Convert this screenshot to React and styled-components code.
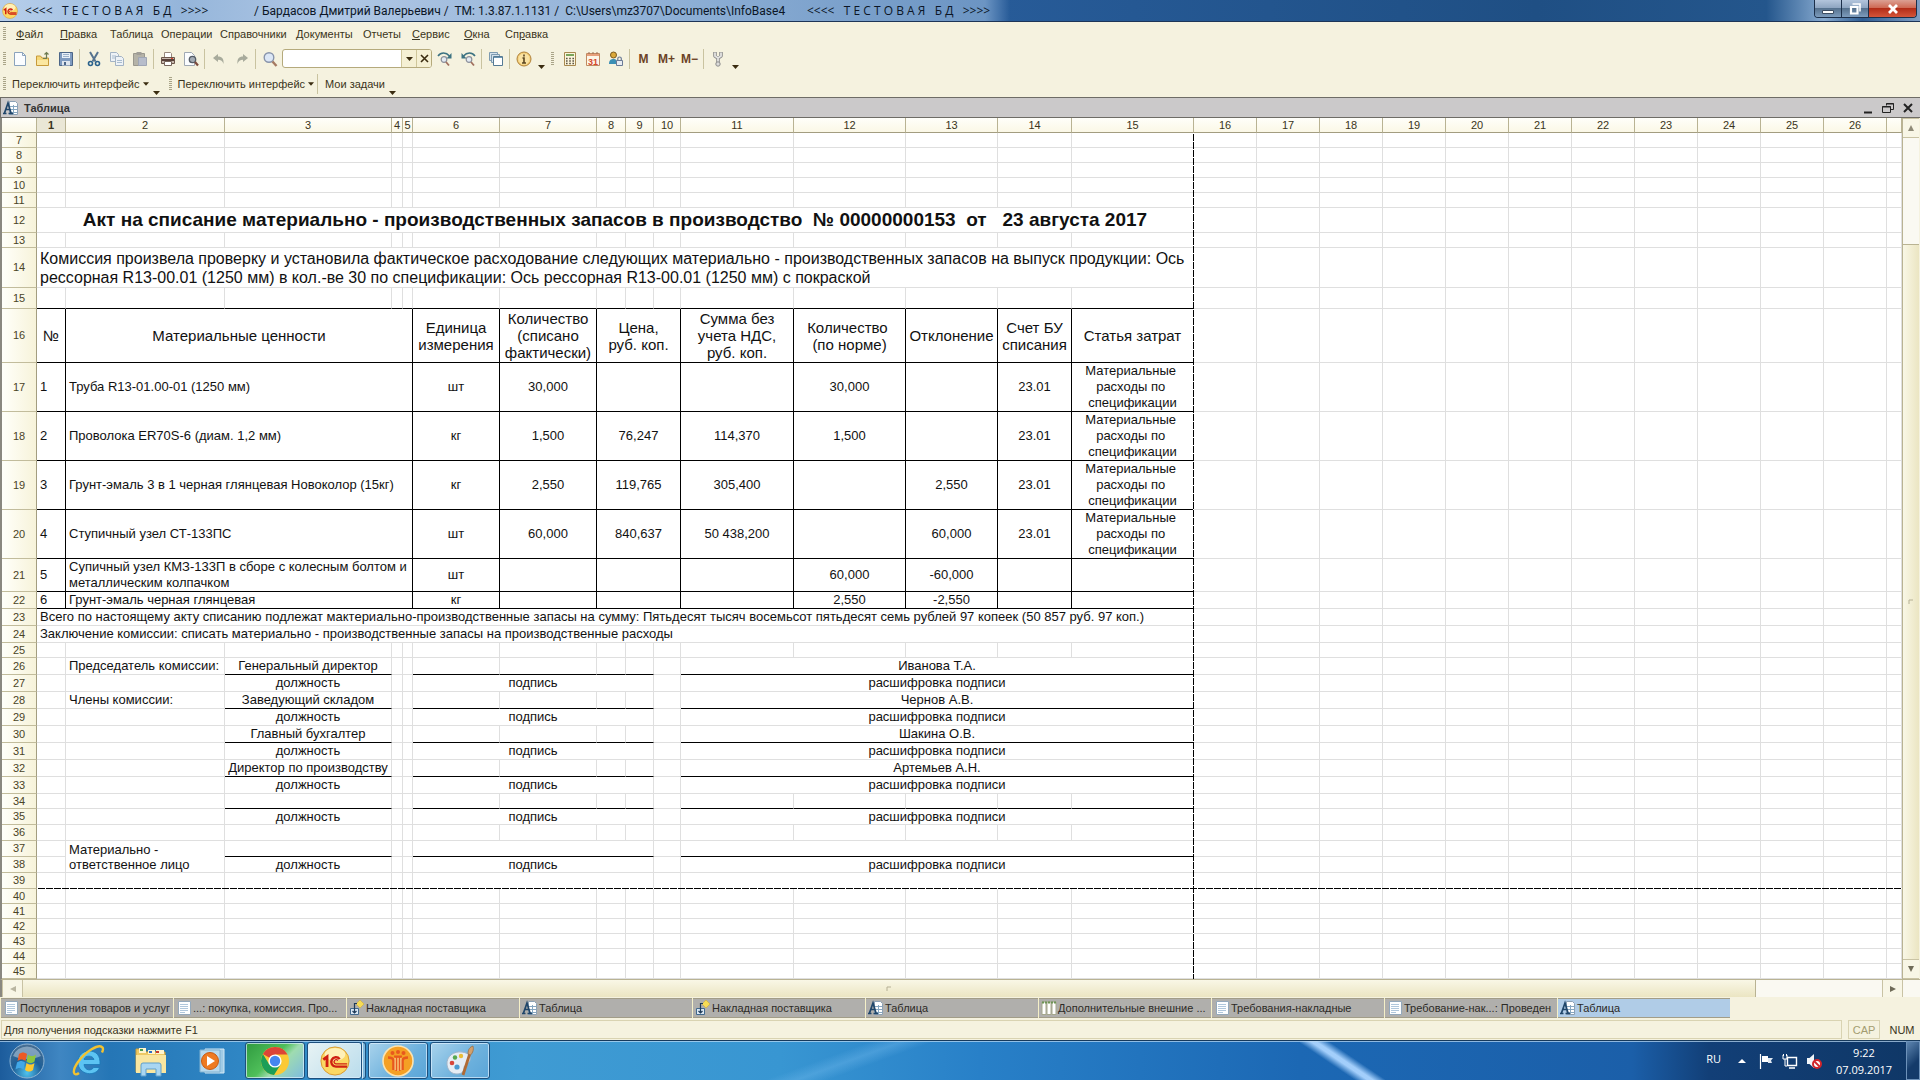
import React from 'react';
import styled, { createGlobalStyle, css } from 'styled-components';

const GlobalStyle = createGlobalStyle`
  * {
    box-sizing: border-box;
  }

  body {
    margin: 0;
    font-family: 'Liberation Sans', Arial, sans-serif;
    font-size: 11px;
    color: #3a3420;
    background: #f5f2df;
  }

  button,
  input {
    margin: 0;
    padding: 0;
    border: 0;
    background: none;
    font: inherit;
    color: inherit;
  }
`;

const Window = styled.div`
  display: flex;
  flex-direction: column;
  height: 100vh;
  overflow: hidden;
`;

/* Title bar */

const TitleBar = styled.header`
  display: flex;
  justify-content: space-between;
  height: 22px;
  border-bottom: 1px solid #1d3557;
  background:
    linear-gradient(90deg, rgba(190, 212, 238, 0.95) 0, rgba(160, 190, 224, 0.9) 180px, rgba(190, 210, 236, 0.9) 330px, rgba(150, 182, 218, 0.9) 700px, rgba(125, 163, 206, 0.8) 985px, rgba(125, 163, 206, 0) 1010px),
    linear-gradient(90deg, #2f68a8 0, #275b98 1000px, #1f4f84 80%, #24568c 92%, #86a9cf 95%, #2e5d93 97%, #7f9fc4 100%);
`;

const TitleText = styled.div`
  display: flex;
  align-items: center;
  gap: 4px;
  padding-left: 2px;
  font-family: Roboto, 'Noto Sans', sans-serif;
  font-size: 12px;
  line-height: 20px;
  color: #0c1626;
  white-space: pre;
`;

const TitlePart = styled.span`
  min-width: ${props => props.$width}px;
`;

const Banner = styled(TitlePart)`
  font-family: 'Open Sans', 'Noto Sans', sans-serif;
`;

const WindowButtons = styled.div`
  display: flex;
  height: 18px;
  margin-right: 3px;
  border: 1px solid #1c2f4a;
  border-top: 0;
  border-radius: 0 0 4px 4px;
  overflow: hidden;
`;

const WindowButton = styled.button`
  display: flex;
  align-items: center;
  justify-content: center;
  width: ${props => (props.$close ? 47 : 27)}px;
  border-right: 1px solid #1c2f4a;
  background: ${props => (props.$close
    ? 'linear-gradient(#dba093, #cf6a55 45%, #b32d18 50%, #d4553a)'
    : 'linear-gradient(#b3c5dc, #8fa6c2 45%, #56728f 50%, #7d9cbd)')};

  &:last-child {
    border-right: 0;
  }
`;

/* Menu and toolbars */

const MenuBar = styled.nav`
  display: grid;
  grid-template-columns: 13px 44px 50px 51px 59px 76px 67px 49px 52px 41px 50px;
  align-items: center;
  height: 24px;
  padding-left: 3px;
`;

const MenuItem = styled.button`
  text-align: left;
  line-height: 14px;
`;

const Toolbar = styled.div`
  display: flex;
  align-items: center;
  height: ${props => props.$height}px;
  padding-left: 3px;
`;

const Grip = styled.span`
  width: 3px;
  height: 14px;
  margin-right: ${props => props.$gap || 2}px;
  background: repeating-linear-gradient(#a9a488 0, #a9a488 1px, transparent 1px, transparent 2px);
`;

const ToolButton = styled.button`
  display: flex;
  align-items: center;
  justify-content: center;
  width: 23px;
  height: 22px;
  font-size: 12px;
  font-weight: bold;
  color: #6b4226;
`;

const Separator = styled.span`
  width: 1px;
  height: 20px;
  margin: 0 2px;
  background: #c9c3a0;
`;

const Overflow = styled.button`
  align-self: flex-end;
  width: 13px;
  height: 12px;
  margin-right: ${props => props.$gap || 0}px;
`;

const SearchBox = styled.div`
  display: flex;
  width: 150px;
  height: 19px;
  margin: 0 1px;
  border: 1px solid #b5aa7c;
  border-radius: 3px;
  background: #fff;
  overflow: hidden;

  input {
    flex: 1;
    min-width: 0;
    padding: 0 3px;
    outline: 0;
  }

  button {
    display: flex;
    align-items: center;
    justify-content: center;
    width: 15px;
    border-left: 1px solid #cfc69a;
    background: #f5f0d4;
  }
`;

const TextButton = styled.button`
  display: flex;
  align-items: center;
  gap: 3px;
  padding: 0 1px 0 5px;
  line-height: 14px;
`;

/* Document window */

const DocTitle = styled.div`
  display: flex;
  align-items: center;
  justify-content: space-between;
  height: 21px;
  padding: 0 6px 0 2px;
  border-top: 1px solid #6e6c66;
  border-bottom: 1px solid #6e6c66;
  border-left: 1px solid #6e6c66;
  background: #cbc9ca;
  font-weight: bold;
  color: #333;
`;

const DocName = styled.div`
  display: flex;
  align-items: center;
  gap: 5px;
`;

const DocButtons = styled.div`
  display: flex;
  gap: 8px;

  button {
    display: flex;
    width: 12px;
    height: 12px;
  }
`;

const SheetArea = styled.div`
  display: flex;
  flex: 1;
  min-height: 0;
  padding-right: 1px;
  border-left: 2px solid #8a8880;
`;

const SheetView = styled.main`
  position: relative;
  flex: 1;
  min-width: 0;
  overflow: hidden;
  background: #fff;
`;

const Sheet = styled.table`
  width: 100%;
  table-layout: fixed;
  border-collapse: separate;
  border-spacing: 0;
  color: #111;
`;

const ColHead = styled.th`
  height: 15px;
  padding: 0;
  border-right: 1px solid #b9b393;
  border-bottom: 1px solid #a39d80;
  background: ${props => (props.$active ? '#eae7d6' : 'linear-gradient(#fffffa, #fbf8e6)')};
  font-size: 11px;
  font-weight: ${props => (props.$active ? 'bold' : 'normal')};
  line-height: 13px;
  color: #3a3420;
`;

const RowHead = styled.th`
  padding: 0;
  border-right: 1px solid #a39d80;
  border-bottom: 1px solid #c2bc9c;
  background: linear-gradient(90deg, #fffffa, #f7f3da);
  font-size: 11px;
  font-weight: normal;
  line-height: 13px;
  color: #4a4426;
`;

const lineColors = { grid: '#dfdfdf', black: '#000' };

const textStyles = {
  body: css`font-size: 13px; line-height: 16px;`,
  tight: css`font-size: 13px; line-height: 15px;`,
  head: css`font-size: 15px; line-height: 17px;`,
  lead: css`font-size: 16px; line-height: 19px;`,
  title: css`font-size: 19px; line-height: 22px; font-weight: bold;`,
};

const Cell = styled.td`
  padding: 0 0 0 ${props => (props.$align === 'left' ? 3 : 0)}px;
  border-right: 1px solid ${props => lineColors[props.$right || 'grid']};
  border-bottom: 1px solid ${props => lineColors[props.$bottom || 'grid']};
  text-align: ${props => props.$align || 'center'};
  white-space: pre;
  ${props => textStyles[props.$kind || 'body']}
`;

const Row = styled.tr`
  height: ${props => props.$height}px;
`;

const dashes = 'transparent 0, transparent 1px, #000 1px, #000 8px';

const BreakRight = styled.div`
  position: absolute;
  top: 15px;
  bottom: 0;
  left: 1191px;
  width: 1px;
  background: repeating-linear-gradient(${dashes}), #fff;
`;

const BreakBottom = styled.div`
  position: absolute;
  top: 770px;
  left: 35px;
  right: 0;
  height: 1px;
  background: repeating-linear-gradient(90deg, ${dashes}), #fff;
`;

const ScrollColumn = styled.div`
  display: flex;
  flex-direction: column;
  width: 17px;
  border-left: 1px solid #b9b393;
  background: #faf9f2;
`;

const ScrollRow = styled.div`
  display: flex;
  height: 18px;
  padding-right: 17px;
  border-top: 1px solid #b9b393;
  border-left: 2px solid #8a8880;
  background: #faf9f2;
`;

const ScrollButton = styled.button`
  display: flex;
  align-items: center;
  justify-content: center;
  width: ${props => (props.$wide ? 21 : 16)}px;
  height: ${props => (props.$wide ? 17 : 20)}px;
  border: 0 solid #c9c3a4;
  border-width: ${props => (props.$wide ? '0 1px' : '1px 0')};
  background: #f8f6e6;
`;

const ScrollTrack = styled.div`
  display: flex;
  flex-direction: ${props => (props.$vertical ? 'column' : 'row')};
  flex: 1;
`;

const ScrollGap = styled.div`
  flex: ${props => props.$size};
`;

const Thumb = styled.div`
  display: flex;
  align-items: center;
  justify-content: center;
  flex: ${props => props.$size};
  border: 0 solid #b9b393;
  border-width: ${props => (props.$vertical ? '1px 0 0' : '0 1px 0 0')};
  background: linear-gradient(${props => (props.$vertical ? '90deg' : '180deg')}, #f9f7e6, #ebe5c2);
`;

/* Window tabs and status bar */

const TabBar = styled.div`
  display: flex;
  height: 23px;
  padding: 1px 0 2px;
`;

const Tab = styled.button`
  display: flex;
  align-items: center;
  gap: 1px;
  flex: 0 1 173px;
  min-width: 0;
  padding-left: 2px;
  border-left: 1px solid #f5f0c8;
  background: ${props => (props.$active ? '#b0cce7' : '#b0afac')};
  box-shadow: inset 0 1px #a29d88, inset 0 -1px #a29d88;
  color: #2c2a26;
  white-space: nowrap;
`;

const StatusBar = styled.footer`
  display: flex;
  gap: 6px;
  height: 20px;
  padding: 0 2px 1px 1px;
`;

const StatusBox = styled.div`
  flex: ${props => (props.$grow ? 1 : 'none')};
  width: ${props => (props.$grow ? 'auto' : '32px')};
  padding: 0 2px;
  border: 1px solid ${props => (props.$bare ? 'transparent' : '#d9d3b2')};
  line-height: 18px;
  text-align: ${props => (props.$grow ? 'left' : 'center')};
  color: ${props => (props.$muted ? '#a39c70' : '#3a3420')};
`;

/* Taskbar */

const Taskbar = styled.div`
  display: flex;
  align-items: stretch;
  height: 40px;
  border-top: 1px solid #173a5c;
  box-shadow: inset 0 1px rgba(190, 220, 245, 0.7);
  background:
    linear-gradient(34deg, transparent 38%, rgba(170, 212, 255, 0.95) 47%, rgba(170, 212, 255, 0.95) 51%, transparent 60%) 1300px 0 / 86px 100% no-repeat,
    linear-gradient(160deg, transparent 44%, rgba(120, 190, 240, 0.35) 50%, transparent 56%) 640px 0 / 420px 100% no-repeat,
    linear-gradient(90deg, #1c5c9c 0, #3f86c2 60px, #2576b6 110px, #2f86c4 240px, #3f9bd3 520px, #3896d2 780px, #2880c8 980px, #1c68b4 1300px, #1b5fa9 85%, #123f77 89%, #0f3766 100%);
`;

const Launch = styled.button`
  display: flex;
  align-items: center;
  justify-content: center;
  width: ${props => props.$width}px;
`;

const TaskButton = styled.button`
  display: flex;
  align-items: center;
  justify-content: center;
  width: ${props => props.$width || 60}px;
  margin: 1px 2px 1px 0;
  border: 1px solid #1d4f7c;
  border-radius: 3px;
  box-shadow: inset 0 0 0 1px rgba(220, 240, 255, 0.7);
  background: ${props => props.$tint || 'linear-gradient(135deg, #a9d3ec, #6db1dd 60%, #5aa5d8)'};
`;

const Stack = styled.span`
  width: 4px;
  margin: 1px 2px 1px -2px;
  border: 1px solid #1d4f7c;
  border-left-color: #d5ebf8;
  border-radius: 0 3px 3px 0;
  background: #7fb9de;
`;

const Tray = styled.div`
  display: flex;
  align-items: center;
  gap: 8px;
  margin-left: auto;
  font-family: 'Open Sans', 'Noto Sans', sans-serif;
  font-size: 11px;
  color: #fff;
`;

const Language = styled.span`
  margin-right: 5px;
  padding-bottom: 5px;
`;

const Clock = styled.time`
  width: 68px;
  line-height: 17px;
  text-align: center;
`;

const ShowDesktop = styled.button`
  align-self: stretch;
  width: 14px;
  border: 1px solid #6d92ba;
  background: linear-gradient(135deg, #5e86b0, #143b6a 60%);
`;

/* Icons */

const Icon = ({ size = 16, box = 16, children }) => (
  <svg width={size} height={size} viewBox={`0 0 ${box} ${box}`} fill="none" aria-hidden="true">
    {children}
  </svg>
);

const Down = ({ size = 7 }) => (
  <svg width={size} height="4" viewBox="0 0 7 4" aria-hidden="true">
    <path d="M0 0h7L3.500 4z" fill="#3a2c10" />
  </svg>
);

const icons = {
  file: (
    <Icon><path d="M2.500 1.500h8l3 3v10h-11z" fill="#fbfdff" stroke="#8ba3bd" /><path d="M10.500 1.500v3h3" stroke="#8ba3bd" /></Icon>
  ),
  open: (
    <Icon>
      <path d="M1.500 5h4l1.500 2h6.500v7.500h-12z" fill="#f6d878" stroke="#c79a3a" />
      <path d="M2 9h11v5H2z" fill="#fbe7a0" />
      <path d="M8 7.500h3.500v-6M9.500 3.500l2-2 2 2" stroke="#6f7c52" strokeWidth="1.200" />
    </Icon>
  ),
  save: (
    <Icon>
      <path d="M1.500 1.500h13v13h-13z" fill="#7f9bc0" stroke="#4c6688" />
      <path d="M4 2h8v5H4z" fill="#e8f0f8" /><path d="M5 3.500h6M5 5.500h6" stroke="#9cb1ca" />
      <path d="M4 10h8v4.500H4z" fill="#dfe6ee" /><path d="M6 11h2v3H6z" fill="#4c6688" />
    </Icon>
  ),
  cut: (
    <Icon>
      <path d="M4 1l5.500 9.500M12 1L6.500 10.500" stroke="#56738f" strokeWidth="2" />
      <circle cx="4.500" cy="12.500" r="2" stroke="#2a628c" strokeWidth="1.600" />
      <circle cx="11.500" cy="12.500" r="2" stroke="#2a628c" strokeWidth="1.600" />
    </Icon>
  ),
  copy: (
    <Icon>
      <path d="M1.500 1.500h6l2 2v7h-8z" fill="#eef2f6" stroke="#a3b3c4" /><path d="M3 5h4M3 7h4" stroke="#a9bccf" />
      <path d="M6.500 5.500h6l2 2v7h-8z" fill="#eef2f6" stroke="#a3b3c4" /><path d="M8 9.500h5M8 11.500h5" stroke="#a9bccf" />
    </Icon>
  ),
  paste: (
    <Icon>
      <path d="M1.500 2.500h11v12h-11z" fill="#b5b3a8" stroke="#9a988e" /><path d="M4.500 1h5v3h-5z" fill="#a09e98" />
      <path d="M6.500 6.500h8v8h-8z" fill="#b7bdcb" stroke="#9fa6b5" />
    </Icon>
  ),
  print: (
    <Icon>
      <path d="M4.500 1.500h6l1 1v5h-7z" fill="#fff" stroke="#98887c" />
      <path d="M1.500 6.500h13v6h-13z" fill="#c8b9ae" stroke="#6c564a" />
      <path d="M2 9h12" stroke="#574038" strokeWidth="2" /><path d="M4.500 10.500h7v4h-7z" fill="#fff" stroke="#77665c" />
      <path d="M11 7.500h2" stroke="#d8452e" />
    </Icon>
  ),
  preview: (
    <Icon>
      <path d="M1.500 1.500h7l3 3v10h-10z" fill="#fbfdff" stroke="#a0a9b3" />
      <circle cx="9.500" cy="8.500" r="3.200" fill="#a3abb4" stroke="#545c66" strokeWidth="1.300" />
      <path d="M12 11l3 3.500" stroke="#7d4b3d" strokeWidth="2.200" />
    </Icon>
  ),
  undo: (
    <Icon><path d="M2 7l5-4v2.500c4 0 6 2 5.500 7.500C11.500 10 10 8.800 7 8.800V11z" fill="#a8ab9c" /></Icon>
  ),
  redo: (
    <Icon><path d="M14 7L9 3v2.500c-4 0-6 2-5.500 7.500C4.500 10 6 8.800 9 8.800V11z" fill="#a8ab9c" /></Icon>
  ),
  search: (
    <Icon>
      <circle cx="7" cy="6.500" r="4.800" fill="#dce7f6" stroke="#8894ab" strokeWidth="1.400" />
      <path d="M10.500 10.500l4 4.500" stroke="#a57a62" strokeWidth="2.400" />
    </Icon>
  ),
  findNext: (
    <Icon>
      <path d="M1 5c3-4 8-4 11.500 0" stroke="#3c7282" strokeWidth="1.600" /><path d="M14.500 2v5.500H9.500z" fill="#3c7282" />
      <circle cx="7" cy="8.500" r="2.800" fill="#e3ebf3" stroke="#8b8f9a" strokeWidth="1.200" />
      <path d="M9 11l3 3.500" stroke="#a1705e" strokeWidth="1.800" />
    </Icon>
  ),
  findPrev: (
    <Icon>
      <path d="M15 5c-3-4-8-4-11.500 0" stroke="#3c7282" strokeWidth="1.600" /><path d="M1.500 2v5.500h5z" fill="#3c7282" />
      <circle cx="9" cy="8.500" r="2.800" fill="#e3ebf3" stroke="#8b8f9a" strokeWidth="1.200" />
      <path d="M11 11l3 3.500" stroke="#a1705e" strokeWidth="1.800" />
    </Icon>
  ),
  windows: (
    <Icon>
      <path d="M1.500 1.500h8v8h-8z" fill="#d5e2ec" stroke="#7d9ab0" /><path d="M3.500 3.500h8v8h-8z" fill="#d5e2ec" stroke="#7d9ab0" />
      <path d="M5.500 5.500h9v9h-9z" fill="#fff" stroke="#557a94" /><path d="M6 6.500h8" stroke="#6c95b2" />
    </Icon>
  ),
  info: (
    <Icon>
      <circle cx="8" cy="8" r="7" fill="#f3cf78" stroke="#b0813a" /><circle cx="8" cy="8" r="5.500" fill="#f9e2a4" />
      <path d="M8 3.500v2M6.500 7H8v5M6 12h4" stroke="#5a4520" strokeWidth="1.600" />
    </Icon>
  ),
  calc: (
    <Icon>
      <path d="M2.500 1.500h11v13h-11z" fill="#fbf5dc" stroke="#a8894f" /><path d="M4 3h8v2H4z" fill="#7aa55a" />
      <path d="M4 7.500h8M4 10h8M4 12.500h8" stroke="#5c5340" strokeWidth="1.400" strokeDasharray="1.600 1.600" />
    </Icon>
  ),
  calendar: (
    <Icon>
      <path d="M1.500 2.500h13v12h-13z" fill="#fdf6e8" stroke="#c08a62" /><path d="M2 3h12v2H2z" fill="#e7a07c" />
      <path d="M4 1v2M8 1v2M12 1v2" stroke="#a06c50" />
      <text x="8" y="13.500" textAnchor="middle" fontSize="9" fill="#d4492c">31</text>
    </Icon>
  ),
  userLock: (
    <Icon>
      <circle cx="5.500" cy="4" r="3" fill="#dba93a" stroke="#7a5a20" /><path d="M1 13c0-4 2-5 4.500-5S9 9 9 13z" fill="#3b8fb5" />
      <path d="M8.500 9.500h6v5h-6z" fill="#e8ecf2" stroke="#6a7a96" /><path d="M9.800 9V7.500c0-2 3.500-2 3.500 0V9" stroke="#6a7a96" strokeWidth="1.200" />
    </Icon>
  ),
  wrench: (
    <Icon>
      <path d="M5 1v4L8 7l3-2V1M8 6v7" stroke="#8c8c8c" strokeWidth="3.600" strokeLinejoin="round" />
      <path d="M5 1.500V5L8 7l3-2V1.500M8 6v7" stroke="#e4e4e2" strokeWidth="1.800" strokeLinejoin="round" />
      <circle cx="8" cy="13" r="2.200" fill="#dcdcda" stroke="#8c8c8c" />
    </Icon>
  ),
  table: (
    <Icon>
      <path d="M6.500 1.500h6l2 2v11h-8z" fill="#fff" stroke="#8ca1b5" />
      <path d="M7 6.500h7M7 9.500h7M7 12.500h7M10.500 5v9" stroke="#86a6c0" />
      <path d="M0 13.500h3.500M5.500 13.500H10M1.500 13L5 3l3 10M3 9.500h4" stroke="#20466a" strokeWidth="1.700" />
    </Icon>
  ),
  page: (
    <Icon>
      <path d="M2.500 1.500h12v13h-12z" fill="#fdfeff" stroke="#93a8bb" />
      <path d="M4 4.500h8M4 6.500h8M4 8.500h8M4 10.500h8M4 12.500h5" stroke="#b0c7dc" />
    </Icon>
  ),
  invoice: (
    <Icon>
      <path d="M11 0l4 4-4 4-4-4z" fill="#f6db55" stroke="#cfa93a" strokeWidth="0.600" />
      <path d="M1.500 8.500h8v6h-8z" fill="#dbe8f4" stroke="#41698e" />
      <path d="M5.500 13V3.500H8M3.500 11l2 2 2-2" stroke="#1e3a58" strokeWidth="1.200" />
    </Icon>
  ),
  columns: (
    <Icon>
      <path d="M1 2h4v12.500H1zM6 2h4v12.500H6zM11 2h4v12.500h-4z" fill="#fff" stroke="#a5a78c" />
      <path d="M1 2.500h14" stroke="#6d9455" strokeWidth="2" strokeDasharray="2 1" />
    </Icon>
  ),
};

const OneC = ({ size }) => (
  <Icon size={size} box={32}>
    <circle cx="16" cy="16" r="15" fill="#fbd863" stroke="#d9962c" />
    <ellipse cx="16" cy="9" rx="11" ry="7" fill="#fff0b8" />
    <path d="M3.500 14.500l4-3v11" stroke="#cf1f12" strokeWidth="3" />
    <path d="M21 14a5 5 0 1 0-4 8h12" stroke="#cf1f12" strokeWidth="2.600" />
    <path d="M19 15.500a2.200 2.200 0 1 0-2 3.500h12" stroke="#cf1f12" strokeWidth="1.400" />
  </Icon>
);

const StartOrb = () => (
  <Icon size={36} box={36}>
    <defs>
      <radialGradient id="orb" cx="50%" cy="85%" r="85%">
        <stop offset="0" stopColor="#4fc3ef" /><stop offset="0.500" stopColor="#1e5f97" /><stop offset="1" stopColor="#4a6f92" />
      </radialGradient>
    </defs>
    <circle cx="18" cy="18" r="17" fill="url(#orb)" stroke="#8fb5d4" />
    <path d="M4 13a15 15 0 0 1 28 0c-8 4-20 4-28 0z" fill="#b9cede" opacity="0.550" />
    <path d="M10 11c3-2 5-2 8 0l-1.500 7c-3-2-5-2-8 0z" fill="#ec5a24" />
    <path d="M19 11.500c3 2 5 2 8 0l-1.500 7c-3 2-5 2-8 0z" fill="#8dc63f" />
    <path d="M8 19.500c3-2 5-2 8 0l-1.500 7c-3-2-5-2-8 0z" fill="#41a8e8" />
    <path d="M17.500 20c3 2 5 2 8 0L24 27c-3 2-5 2-8 0z" fill="#fdc82f" />
  </Icon>
);

const Explorer = () => (
  <Icon size={32} box={32}>
    <path d="M1 4h8l2 3h19v20H1z" fill="#edc964" stroke="#c99f3c" />
    <path d="M4 3h7v5H4zM13 5h7v4h-7zM21 5h8v4h-8z" fill="#fff5cf" />
    <path d="M5 4h3v2H5z" fill="#4a9b4a" /><path d="M14 6h3v2h-3z" fill="#2e6fc4" /><path d="M21 6h3v2h-3z" fill="#c93c2c" />
    <path d="M1 10h30v18H1z" fill="#f9e6a0" />
    <path d="M6 31V20q0-2 2-2h16q2 0 2 2v11h-5v-7H11v7z" fill="#a9d6f2" stroke="#5f9fcb" />
  </Icon>
);

const IE = () => (
  <Icon size={34} box={34}>
    <path d="M12 15.500C12.500 11 21 11 22 15.500zM28 20.500c.5-9-3.500-13.500-11-13.500-6 0-11 4-11 11.500C6 31 24 33.500 27.500 23.500H21.500c-2 4-9 3-9.500-3z" fill="#5cc3f2" stroke="#1979b8" strokeWidth="0.800" fillRule="evenodd" />
    <path d="M7 29C2 33-1 28 6 18S27-1 30.500 3.500c1 1.500.5 3-.5 5" stroke="#f2c230" strokeWidth="2.400" />
  </Icon>
);

const Player = () => (
  <Icon size={26} box={26}>
    <path d="M6 1h19v24H6z" fill="#9fcbe6" stroke="#d3e9f6" /><path d="M1 2h20v22H1z" fill="#b7d9ee" stroke="#7fb0d0" />
    <circle cx="11" cy="13" r="8.500" fill="#ee7a22" stroke="#c95b12" /><path d="M8 8l8 5-8 5z" fill="#fff" />
  </Icon>
);

const Chrome = () => (
  <Icon size={30} box={30}>
    <circle cx="15" cy="15" r="14" fill="#fbc934" />
    <path d="M2.900 8A14 14 0 0 0 14 29l7-11-6-3-6 3z" fill="#1b9e57" />
    <path d="M15 15L2.900 8A14 14 0 0 1 27.500 8.500H15z" fill="#dc4437" />
    <circle cx="15" cy="15" r="6.600" fill="#fff" /><circle cx="15" cy="15" r="5.200" fill="#4586f0" />
  </Icon>
);

const People = () => (
  <Icon size={32} box={32}>
    <circle cx="16" cy="16" r="15" fill="#f4a024" stroke="#fbe3b0" strokeWidth="1.600" />
    <circle cx="10.500" cy="8" r="2" fill="#e8581e" /><circle cx="16" cy="7" r="2" fill="#e8581e" /><circle cx="21.500" cy="8" r="2" fill="#e8581e" />
    <path d="M6 12.500q5 0 5.500 3V25M26 12.500q-5 0-5.500 3V25" stroke="#e8581e" strokeWidth="2.600" />
    <path d="M12 11.500h8M14.500 12v14M17.500 12v14" stroke="#e8581e" strokeWidth="2" />
    <path d="M13.100 13v12M16 13v13M18.900 13v12" stroke="#fde7ae" strokeWidth="0.900" />
  </Icon>
);

const Paint = () => (
  <Icon size={32} box={32}>
    <path d="M3 20C2 11 10 6 18 7s10 6 7 10-5 3-5 6-2 6-7 6-9-3-10-9z" fill="#e6edf4" stroke="#9fb4c9" />
    <circle cx="8" cy="18" r="2.300" fill="#d8463a" /><circle cx="11" cy="12.500" r="2.200" fill="#56a84f" />
    <circle cx="17" cy="11" r="2.200" fill="#e9bd36" /><circle cx="13" cy="22" r="2.600" fill="#4b9bd1" />
    <path d="M26 8l-7 22" stroke="#b06a34" strokeWidth="2.800" /><path d="M24 9c0-5 2-7 5-8 1 3 0 7-2.500 9z" fill="#d3a06c" stroke="#96683c" strokeWidth="0.700" />
  </Icon>
);

/* Data */

const menu = [
  ['', 'Ф', 'айл'], ['', 'П', 'равка'], ['Таблица'], ['Операции'], ['Справочники'],
  ['Документы'], ['Отчеты'], ['', 'С', 'ервис'], ['', 'О', 'кна'], ['Сп', 'р', 'авка'],
];

const columnWidths = [29, 159, 167, 11, 10, 87, 97, 29, 28, 27, 113, 112, 92, 74, 122, ...Array(11).fill(63)];
const tail = Array(12).fill({});

const blank = (n, height, bottom) => ({ n, height, cells: Array(15).fill({ bottom }) });

const merged = (n, height, text, extra) => ({
  n,
  height,
  cells: [{ span: 15, text, align: 'left', ...extra }],
});

// Material table row: the name takes columns 2-5 and the price takes 8-10.
const tableRow = (n, height, values, kind) => ({
  n,
  height,
  cells: values.map((text, i) => ({
    text,
    kind,
    span: { 1: 4, 4: 3 }[i],
    align: i < 2 && !kind ? 'left' : 'center',
    right: 'black',
    bottom: 'black',
  })),
});

const signRow = (n, label, post, name) => ({
  n,
  height: 17,
  cells: [
    {}, { text: label, align: 'left' }, { text: post, bottom: 'black' }, {}, {},
    ...Array(4).fill({ bottom: 'black' }),
    {}, { span: 5, text: name, bottom: 'black' },
  ],
});

const captionRow = (n, height, label = {}) => {
  const kind = height < 17 ? 'tight' : 'body';
  return {
    n,
    height,
    cells: [
      {}, ...(label ? [label] : []), { text: 'должность', kind }, {}, {},
      { span: 4, text: 'подпись', kind }, {}, { span: 5, text: 'расшифровка подписи', kind },
    ],
  };
};

const expense = 'Материальные \nрасходы по \nспецификации';

const rows = [
  blank(7, 15), blank(8, 15), blank(9, 15), blank(10, 15), blank(11, 15),
  merged(12, 25, 'Акт на списание материально - производственных запасов в производство  № 00000000153  от   23 августа 2017', { align: 'center', kind: 'title' }),
  blank(13, 15),
  merged(14, 40, 'Комиссия произвела проверку и установила фактическое расходование следующих материально - производственных запасов на выпуск продукции: Ось \nрессорная R13-00.01 (1250 мм) в кол.-ве 30 по спецификации: Ось рессорная R13-00.01 (1250 мм) с покраской', { kind: 'lead' }),
  blank(15, 21, 'black'),
  tableRow(16, 54, ['№', 'Материальные ценности', 'Единица\nизмерения', 'Количество\n(списано\nфактически)', 'Цена,\nруб. коп.', 'Сумма без\nучета НДС,\nруб. коп.', 'Количество \n(по норме)', 'Отклонение', 'Счет БУ\nсписания', 'Статья затрат'], 'head'),
  tableRow(17, 49, ['1', 'Труба R13-01.00-01 (1250 мм)', 'шт', '30,000', '', '', '30,000', '', '23.01', expense]),
  tableRow(18, 49, ['2', 'Проволока ER70S-6 (диам. 1,2 мм)', 'кг', '1,500', '76,247', '114,370', '1,500', '', '23.01', expense]),
  tableRow(19, 49, ['3', 'Грунт-эмаль 3 в 1 черная глянцевая Новоколор (15кг)', 'кг', '2,550', '119,765', '305,400', '', '2,550', '23.01', expense]),
  tableRow(20, 49, ['4', 'Ступичный узел СТ-133ПС', 'шт', '60,000', '840,637', '50 438,200', '', '60,000', '23.01', expense]),
  tableRow(21, 33, ['5', 'Супичный узел КМЗ-133П в сборе с колесным болтом и\nметаллическим колпачком', 'шт', '', '', '', '60,000', '-60,000', '', '']),
  tableRow(22, 17, ['6', 'Грунт-эмаль черная глянцевая', 'кг', '', '', '', '2,550', '-2,550', '', '']),
  merged(23, 17, 'Всего по настоящему акту списанию подлежат мактериально-производственные запасы на сумму: Пятьдесят тысяч восемьсот пятьдесят семь рублей 97 копеек (50 857 руб. 97 коп.)'),
  merged(24, 17, 'Заключение комиссии: списать материально - производственные запасы на производственные расходы'),
  blank(25, 15),
  signRow(26, 'Председатель комиссии:', 'Генеральный директор', 'Иванова Т.А.'),
  captionRow(27, 17),
  signRow(28, 'Члены комиссии:', 'Заведующий складом', 'Чернов А.В.'),
  captionRow(29, 17),
  signRow(30, '', 'Главный бухгалтер', 'Шакина О.В.'),
  captionRow(31, 17),
  signRow(32, '', 'Директор по производству', 'Артемьев А.Н.'),
  captionRow(33, 17),
  {
    n: 34,
    height: 15,
    cells: Array.from({ length: 15 }, (_, i) => ({ bottom: [0, 1, 3, 4, 9].includes(i) ? 'grid' : 'black' })),
  },
  captionRow(35, 16),
  blank(36, 16),
  {
    n: 37,
    height: 16,
    cells: [
      {}, { text: 'Материально -\nответственное лицо', align: 'left', kind: 'tight', rows: 2 }, { bottom: 'black' }, {}, {},
      { span: 4, bottom: 'black' }, {}, { span: 5, bottom: 'black' },
    ],
  },
  captionRow(38, 16, null),
  { n: 39, height: 16, cells: [{}, {}, {}, {}, {}, { span: 4 }, {}, { span: 5 }] },
  ...[40, 41, 42, 43, 44, 45].map(n => blank(n, 15)),
];

const tabs = [
  ['page', 'Поступления товаров и услуг'],
  ['page', '...: покупка, комиссия. Про...'],
  ['invoice', 'Накладная поставщика'],
  ['table', 'Таблица'],
  ['invoice', 'Накладная поставщика'],
  ['table', 'Таблица'],
  ['columns', 'Дополнительные внешние ...'],
  ['page', 'Требования-накладные'],
  ['page', 'Требование-нак...: Проведен'],
  ['table', 'Таблица'],
];

const Tools = ({ names }) => names.map((name, i) => (
  name === '|'
    ? <Separator key={i} />
    : <ToolButton key={i} aria-label={name}>{icons[name] || name}</ToolButton>
));

const Spreadsheet = () => (
  <SheetView>
    <Sheet>
      <colgroup>
        <col width="35" />
        {columnWidths.map((width, i) => <col key={i} width={width} />)}
        <col />
      </colgroup>
      <thead>
        <tr>
          <ColHead />
          {columnWidths.map((_, i) => <ColHead key={i} $active={i === 0}>{i + 1}</ColHead>)}
          <ColHead />
        </tr>
      </thead>
      <tbody>
        {rows.map(row => (
          <Row key={row.n} $height={row.height}>
            <RowHead>{row.n}</RowHead>
            {[...row.cells, ...tail].map((cell, i) => (
              <Cell
                key={i}
                colSpan={cell.span}
                rowSpan={cell.rows}
                $align={cell.align}
                $kind={cell.kind}
                $right={cell.right}
                $bottom={cell.bottom}
              >
                {cell.text}
              </Cell>
            ))}
          </Row>
        ))}
      </tbody>
    </Sheet>
    <BreakRight />
    <BreakBottom />
  </SheetView>
);

const App = () => (
  <Window>
    <GlobalStyle />
    <TitleBar>
      <TitleText>
        <OneC size={16} />
        <Banner $width={228}>{' <<<<   Т Е С Т О В А Я   Б Д   >>>>'}</Banner>
        <TitlePart $width={549}>{'/ Бардасов Дмитрий Валерьевич /  ТМ: 1.3.87.1.1131 /  C:\\Users\\mz3707\\Documents\\InfoBase4'}</TitlePart>
        <Banner>{'<<<<   Т Е С Т О В А Я   Б Д   >>>>'}</Banner>
      </TitleText>
      <WindowButtons>
        <WindowButton aria-label="Свернуть">
          <Icon size={14} box={14}><path d="M1.500 8.500h11v3h-11z" fill="#fff" stroke="#3c4d62" /></Icon>
        </WindowButton>
        <WindowButton aria-label="Восстановить">
          <Icon size={14} box={14}>
            <path d="M4.500 2h7.500v7.500" stroke="#fff" strokeWidth="1.600" />
            <path d="M3 5h6.500v6.500H3z" stroke="#fff" strokeWidth="2.200" />
          </Icon>
        </WindowButton>
        <WindowButton aria-label="Закрыть" $close>
          <Icon size={12} box={12}><path d="M2 2l8 8M10 2l-8 8" stroke="#fff" strokeWidth="2.800" /></Icon>
        </WindowButton>
      </WindowButtons>
    </TitleBar>

    <MenuBar>
      <Grip />
      {menu.map(([before, key, after]) => (
        <MenuItem key={before + key}>{before}{key && <u>{key}</u>}{after}</MenuItem>
      ))}
    </MenuBar>

    <Toolbar $height={25}>
      <Grip />
      <Tools names={['file', 'open', 'save', '|', 'cut', 'copy', 'paste', '|', 'print', 'preview', '|', 'undo', 'redo', '|', 'search']} />
      <SearchBox>
        <input type="text" aria-label="Поиск" />
        <button aria-label="История"><Down /></button>
        <button aria-label="Очистить">
          <Icon size={9} box={9}><path d="M1 1l7 7M8 1L1 8" stroke="#3a2c10" strokeWidth="1.600" /></Icon>
        </button>
      </SearchBox>
      <Tools names={['findNext', 'findPrev', '|', 'windows', '|', 'info']} />
      <Overflow $gap={3} aria-label="Ещё"><Down /></Overflow>
      <Grip $gap={4} />
      <Tools names={['calc', 'calendar', 'userLock', '|', 'M', 'M+', 'M−', '|', 'wrench']} />
      <Overflow aria-label="Ещё"><Down /></Overflow>
    </Toolbar>

    <Toolbar $height={26}>
      <Grip $gap={1} />
      <TextButton>Переключить интерфейс <Down size={6} /></TextButton>
      <Overflow $gap={6} aria-label="Ещё"><Down /></Overflow>
      <Grip $gap={1} />
      <TextButton>Переключить интерфейс <Down size={6} /></TextButton>
      <Separator />
      <TextButton>Мои задачи</TextButton>
      <Overflow aria-label="Ещё"><Down /></Overflow>
    </Toolbar>

    <DocTitle>
      <DocName>{icons.table}Таблица</DocName>
      <DocButtons>
        <button aria-label="Свернуть"><Icon size={12} box={12}><path d="M2 10.500h8" stroke="#222" strokeWidth="2" /></Icon></button>
        <button aria-label="Восстановить">
          <Icon size={12} box={12}>
            <path d="M4.500 3.500v-2h7v6h-3M4 2h8" stroke="#222" /><path d="M.5 4.500h8v6h-8zM0 5h9" stroke="#222" />
          </Icon>
        </button>
        <button aria-label="Закрыть"><Icon size={12} box={12}><path d="M2 2l8 8M10 2l-8 8" stroke="#222" strokeWidth="2" /></Icon></button>
      </DocButtons>
    </DocTitle>

    <SheetArea>
      <Spreadsheet />
      <ScrollColumn>
        <ScrollButton aria-label="Вверх"><Icon size={8} box={8}><path d="M1 7h6L4 1z" fill="#8f8b78" /></Icon></ScrollButton>
        <ScrollTrack $vertical>
          <ScrollGap $size={106} />
          <Thumb $vertical $size={714}><Icon size={6} box={6}><path d="M1 5V1h4" stroke="#b5b094" /></Icon></Thumb>
        </ScrollTrack>
        <ScrollButton aria-label="Вниз"><Icon size={8} box={8}><path d="M1 1h6L4 7z" fill="#6f6b58" /></Icon></ScrollButton>
      </ScrollColumn>
    </SheetArea>
    <ScrollRow>
      <ScrollButton $wide aria-label="Влево"><Icon size={8} box={8}><path d="M7 1v6L1 4z" fill="#b9b5a0" /></Icon></ScrollButton>
      <ScrollTrack>
        <Thumb $size={1733}><Icon size={6} box={6}><path d="M1 5V1h4" stroke="#b5b094" /></Icon></Thumb>
        <ScrollGap $size={126} />
      </ScrollTrack>
      <ScrollButton $wide aria-label="Вправо"><Icon size={8} box={8}><path d="M1 1v6l6-3z" fill="#6f6b58" /></Icon></ScrollButton>
    </ScrollRow>

    <TabBar>
      {tabs.map(([icon, label], i) => (
        <Tab key={i} $active={i === tabs.length - 1}>{icons[icon]}{label}</Tab>
      ))}
    </TabBar>
    <StatusBar>
      <StatusBox $grow>Для получения подсказки нажмите F1</StatusBox>
      <StatusBox $muted>CAP</StatusBox>
      <StatusBox $bare>NUM</StatusBox>
    </StatusBar>

    <Taskbar>
      <Launch $width={54} aria-label="Пуск"><StartOrb /></Launch>
      <Launch $width={70} aria-label="Internet Explorer"><IE /></Launch>
      <Launch $width={54} aria-label="Проводник"><Explorer /></Launch>
      <Launch $width={67} aria-label="Проигрыватель"><Player /></Launch>
      <TaskButton aria-label="Chrome" $tint="linear-gradient(135deg, #2f9a3f, #4fbf5a 45%, #9fdcb0 60%, #7dbbe0)"><Chrome /></TaskButton>
      <TaskButton aria-label="1С" $width={55} $tint="linear-gradient(135deg, #e8f3f4, #b9dcec)"><OneC size={30} /></TaskButton>
      <Stack />
      <TaskButton aria-label="Контакты"><People /></TaskButton>
      <TaskButton aria-label="Paint"><Paint /></TaskButton>
      <Tray>
        <Language>RU</Language>
        <Icon size={16}><path d="M4 10h8L8 6z" fill="#fff" /></Icon>
        <Icon size={16}><path d="M2.500 1v15" stroke="#fff" strokeWidth="1.200" /><path d="M4 3h6v6H4z" fill="#fff" /><path d="M10 5h5l-2 2.500 1 2.500h-4z" fill="#dfe8f2" /></Icon>
        <Icon size={16}><path d="M5.500 4.500h9v8h-9zM7 15h6" stroke="#fff" strokeWidth="1.400" /><path d="M1 2v4h4V2M3 6v7h2M1.500 1v2M4.500 1v2" stroke="#fff" /></Icon>
        <Icon size={16}>
          <path d="M1 5h2.500L8 1v14l-4.500-4H1z" fill="#f2f6fa" />
          <circle cx="11" cy="11" r="4" fill="#fff" stroke="#d2252b" strokeWidth="2" /><path d="M8.500 8.500l5 5" stroke="#d2252b" strokeWidth="1.800" />
        </Icon>
        <Clock>9:22<br />07.09.2017</Clock>
        <ShowDesktop aria-label="Показать рабочий стол" />
      </Tray>
    </Taskbar>
  </Window>
);

export default App;
